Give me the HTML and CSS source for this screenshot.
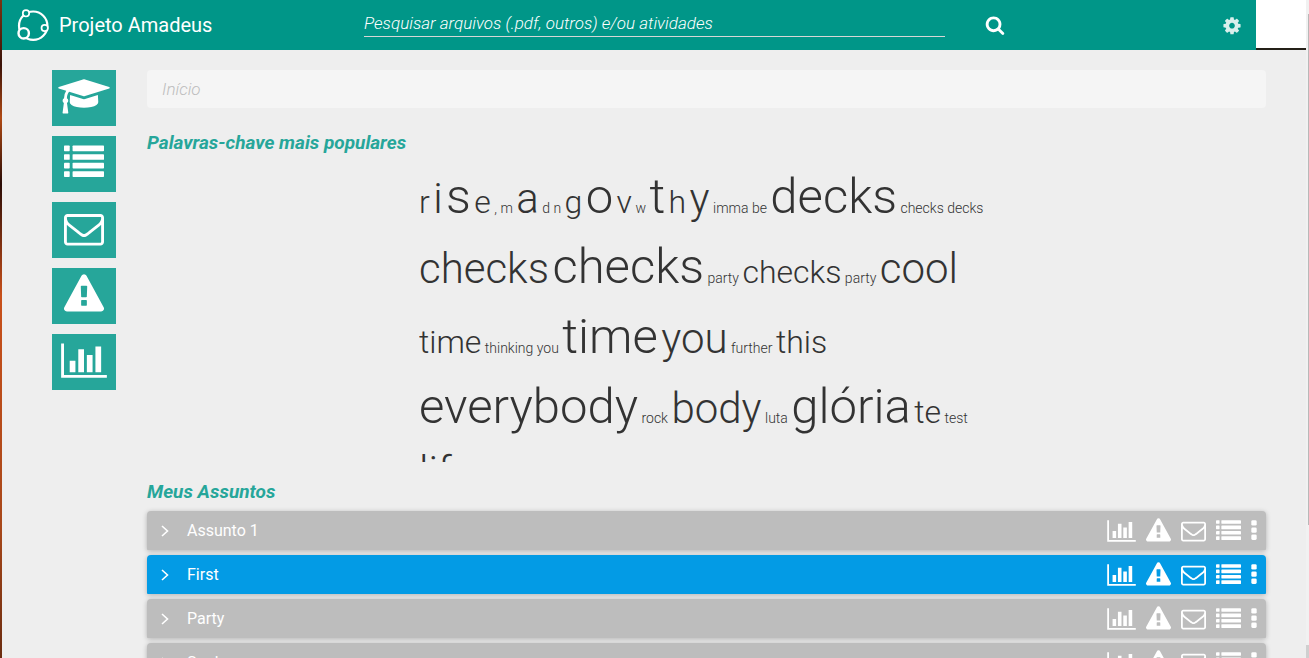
FILE: index.html
```
<!DOCTYPE html>
<html lang="pt-BR">
<head>
<meta charset="utf-8">
<title>Projeto Amadeus</title>
<link rel="stylesheet" href="styles.css">
</head>
<body>
<svg class="sprite" aria-hidden="true">
  <symbol id="chart" viewBox="0 -32 2048 1792"><path d="M640 896v512h-256v-512zM1024 384v1024h-256v-1024zM2048 1536v128h-2048v-1536h128v1408zM1408 640v768h-256v-768zM1792 256v1152h-256v-1152z"/></symbol>
  <symbol id="warning" viewBox="0 -16 1792 1792"><path d="M1024 1375v-190q0-14-9.500-23.500t-22.500-9.500h-192q-13 0-22.500 9.500t-9.500 23.500v190q0 14 9.500 23.500t22.500 9.500h192q13 0 22.500-9.500t9.500-23.500zm-2-374l18-459q0-12-10-19-13-11-24-11h-220q-11 0-24 11-10 7-10 21l17 457q0 10 10 16.500t24 6.500h185q14 0 23.500-6.500t10.500-16.500zm-14-934l768 1408q35 63-2 126-17 29-46.500 46t-63.500 17h-1536q-34 0-63.500-17t-46.500-46q-37-63-2-126l768-1408q17-31 47-49t65-18 65 18 47 49z"/></symbol>
  <symbol id="mail" viewBox="0 -16 1792 1792"><path d="M1664 1504v-768q-32 36-69 66-268 206-426 338-51 43-83 67t-86.500 48.500-102.500 24.500h-2q-48 0-102.500-24.500t-86.500-48.500-83-67q-158-132-426-338-37-30-69-66v768q0 13 9.500 22.500t22.500 9.500h1472q13 0 22.500-9.500t9.500-22.500zm0-1051v-24.500l-.5-13-3-12.500-5.500-9-9-7.500-14-2.500h-1472q-13 0-22.500 9.500t-9.500 22.500q0 168 147 284 193 152 401 317 6 5 35 29.500t46 37.500 44.500 31.500 50.500 27.500 43 9h2q20 0 43-9t50.500-27.500 44.500-31.500 46-37.500 35-29.500q208-165 401-317 54-43 100.500-115.500t46.500-131.500zm128-37v1088q0 66-47 113t-113 47h-1472q-66 0-113-47t-47-113v-1088q0-66 47-113t113-47h1472q66 0 113 47t47 113z"/></symbol>
  <symbol id="list" viewBox="0 -32 1792 1792"><g><rect y="128" width="256" height="256" rx="32"/><rect x="384" y="128" width="1408" height="256" rx="32"/><rect y="512" width="256" height="256" rx="32"/><rect x="384" y="512" width="1408" height="256" rx="32"/><rect y="896" width="256" height="256" rx="32"/><rect x="384" y="896" width="1408" height="256" rx="32"/><rect y="1280" width="256" height="256" rx="32"/><rect x="384" y="1280" width="1408" height="256" rx="32"/></g></symbol>
  <symbol id="dots" viewBox="0 -32 384 1792"><rect y="128" width="384" height="384" rx="96"/><rect y="640" width="384" height="384" rx="96"/><rect y="1152" width="384" height="384" rx="96"/></symbol>
  <symbol id="cap" viewBox="0 -16 2304 1792"><path d="M1774 836l18 316q4 69-82 128t-235 93.500-323 34.500-323-34.500-235-93.500-82-128l18-316 574 181q22 7 48 7t48-7zm530-324q0 23-22 31l-1120 352q-4 1-10 1t-10-1l-652-206q-43 34-71 111.500t-34 178.500q63 36 63 109 0 69-58 107l58 433q2 14-8 25-9 11-24 11h-192q-15 0-24-11-10-11-8-25l58-433q-58-38-58-107 0-73 65-111 11-207 98-330l-333-104q-22-8-22-31t22-31l1120-352q4-1 10-1t10 1l1120 352q22 8 22 31z"/></symbol>
  <symbol id="cog" viewBox="0 -64 1792 1792"><path d="M1152 896q0-106-75-181t-181-75-181 75-75 181 75 181 181 75 181-75 75-181zm512-109v222q0 12-8 23t-20 13l-185 28q-19 54-39 91 35 50 107 138 10 12 10 25t-9 23q-27 37-99 108t-94 71q-12 0-26-9l-138-108q-44 23-91 38-16 136-29 186-7 28-36 28h-222q-14 0-24.500-8.500t-11.500-21.500l-28-184q-49-16-90-37l-141 107q-10 9-25 9-14 0-25-11-126-114-165-168-7-10-7-23 0-12 8-23 15-21 51-66.500t54-70.500q-27-50-41-99l-183-27q-13-2-21-12.500t-8-23.500v-222q0-12 8-23t19-13l186-28q14-46 39-92-40-57-107-138-10-12-10-24 0-10 9-23 26-36 98.500-107.500t94.500-71.500q13 0 26 10l138 107q44-23 91-38 16-136 29-186 7-28 36-28h222q14 0 24.500 8.500t11.500 21.500l28 184q49 16 90 37l142-107q9-9 24-9 13 0 25 10 129 119 165 170 7 8 7 22 0 12-8 23-15 21-51 66.500t-54 70.500q26 50 41 98l183 28q13 2 21 12.500t8 23.500z"/></symbol>
  <symbol id="search" viewBox="0 0 1792 1792"><path d="M1216 832q0-185-131.500-316.500t-316.500-131.500-316.500 131.500-131.500 316.500 131.500 316.500 316.500 131.500 316.500-131.500 131.500-316.500zm512 832q0 52-38 90t-90 38q-54 0-90-38l-343-342q-179 124-399 124-143 0-273.500-55.500t-225-150-150-225-55.500-273.500 55.500-273.500 150-225 225-150 273.500-55.500 273.500 55.500 225 150 150 225 55.500 273.500q0 220-124 399l343 343q37 37 37 90z"/></symbol>
  <symbol id="chevron" viewBox="0 0 8 12"><path class="line" d="M1 1l5.500 5L1 11"/></symbol>
</svg>

<div class="window">
  <header class="topbar">
    <div class="bar">
      <a class="brand" href="#">
        <svg class="logo" viewBox="0 0 32 34" aria-hidden="true">
          <circle cx="16.200" cy="17.700" r="14.200" stroke-width="2.200"/>
          <circle class="node" cx="9" cy="5.300" r="3.200" stroke-width="1.700"/>
          <circle class="node" cx="27.700" cy="20" r="3.200" stroke-width="1.700"/>
          <circle class="node" cx="6.700" cy="25.300" r="5.200" stroke-width="2.400"/>
        </svg>
        <span>Projeto Amadeus</span>
      </a>
      <form class="search">
        <input class="field" type="text" aria-label="Pesquisar" placeholder="Pesquisar arquivos (.pdf, outros) e/ou atividades">
        <button class="icon-btn" type="button" aria-label="Pesquisar"><svg class="i20"><use href="#search"/></svg></button>
      </form>
      <button class="icon-btn settings" type="button" aria-label="Configurações"><svg class="i20"><use href="#cog"/></svg></button>
    </div>
    <div class="corner"></div>
  </header>

  <div class="page">
    <nav class="side">
      <a class="tile" href="#" aria-label="Assuntos"><svg class="cap"><use href="#cap"/></svg></a>
      <a class="tile" href="#" aria-label="Lista"><svg class="i40"><use href="#list"/></svg></a>
      <a class="tile" href="#" aria-label="Mensagens"><svg class="i40"><use href="#mail"/></svg></a>
      <a class="tile" href="#" aria-label="Pendências"><svg class="i40"><use href="#warning"/></svg></a>
      <a class="tile" href="#" aria-label="Relatórios"><svg class="chart40"><use href="#chart"/></svg></a>
    </nav>

    <main class="content">
      <div class="crumb">Início</div>
      <h2 class="title">Palavras-chave mais populares</h2>
      <div class="cloud">
        <a class="m" href="#">r</a>
        <a class="l" href="#">i</a>
        <a class="xl" href="#">s</a>
        <a class="m" href="#">e</a>
        <a href="#">,</a>
        <a href="#">m</a>
        <a class="l" href="#">a</a>
        <a href="#">d</a>
        <a href="#">n</a>
        <a class="m" href="#">g</a>
        <a class="xl" href="#">o</a>
        <a class="m" href="#">v</a>
        <a href="#">w</a>
        <a class="xl" href="#">t</a>
        <a class="m" href="#">h</a>
        <a class="l" href="#">y</a>
        <a href="#">imma be</a>
        <a class="xl" href="#">decks</a>
        <a href="#">checks decks</a>
        <a class="l" href="#">checks</a>
        <a class="xl" href="#">checks</a>
        <a href="#">party</a>
        <a class="m" href="#">checks</a>
        <a href="#">party</a>
        <a class="l" href="#">cool</a>
        <a class="m" href="#">time</a>
        <a href="#">thinking you</a>
        <a class="xl" href="#">time</a>
        <a class="l" href="#">you</a>
        <a href="#">further</a>
        <a class="m" href="#">this</a>
        <a class="xl" href="#">everybody</a>
        <a href="#">rock</a>
        <a class="l" href="#">body</a>
        <a href="#">luta</a>
        <a class="xl" href="#">glória</a>
        <a class="m" href="#">te</a>
        <a href="#">test</a>
        <a class="l" href="#">life</a>
      </div>
      <h2 class="title">Meus Assuntos</h2>
      <ul class="subjects">
        <li class="subject"><svg class="chev"><use href="#chevron"/></svg><a class="name" href="#">Assunto 1</a><span class="tools"><svg class="chart25"><use href="#chart"/></svg><svg class="i25"><use href="#warning"/></svg><svg class="i25"><use href="#mail"/></svg><svg class="i25"><use href="#list"/></svg><svg class="dots"><use href="#dots"/></svg></span></li>
        <li class="subject active"><svg class="chev"><use href="#chevron"/></svg><a class="name" href="#">First</a><span class="tools"><svg class="chart25"><use href="#chart"/></svg><svg class="i25"><use href="#warning"/></svg><svg class="i25"><use href="#mail"/></svg><svg class="i25"><use href="#list"/></svg><svg class="dots"><use href="#dots"/></svg></span></li>
        <li class="subject"><svg class="chev"><use href="#chevron"/></svg><a class="name" href="#">Party</a><span class="tools"><svg class="chart25"><use href="#chart"/></svg><svg class="i25"><use href="#warning"/></svg><svg class="i25"><use href="#mail"/></svg><svg class="i25"><use href="#list"/></svg><svg class="dots"><use href="#dots"/></svg></span></li>
        <li class="subject"><svg class="chev"><use href="#chevron"/></svg><a class="name" href="#">Sook</a><span class="tools"><svg class="chart25"><use href="#chart"/></svg><svg class="i25"><use href="#warning"/></svg><svg class="i25"><use href="#mail"/></svg><svg class="i25"><use href="#list"/></svg><svg class="dots"><use href="#dots"/></svg></span></li>
      </ul>
    </main>
  </div>
</div>
<div class="scroll"></div>
</body>
</html>
```

FILE: styles.css
```
* { box-sizing: border-box; }
html, body { height: 100%; }
body {
  margin: 0;
  display: flex;
  overflow: hidden;
  background: #eee;
  color: #333;
  font: 14px/20px Roboto, sans-serif;
}
a { color: inherit; text-decoration: none; }
svg { display: block; fill: currentColor; }
.sprite { position: absolute; width: 0; height: 0; }
.line { fill: none; stroke: currentColor; stroke-width: 1.6; }

.window {
  flex: 1;
  min-width: 0;
  border-left: 2px solid;
  border-image: linear-gradient(#7a3412, #3a1208 10%, #b04a14 18%, #2a0c06 28%, #c8501a 45%, #a8481a 80%, #6a2c10) 1;
}
.topbar { display: flex; height: 50px; }
.bar {
  flex: 1;
  display: flex;
  align-items: center;
  padding: 0 14px 0 15px;
  background: #009688;
  color: #fff;
}
.brand {
  flex: 0 0 347px;
  display: flex;
  align-items: center;
  gap: 10px;
  font-size: 20px;
}
.logo { width: 32px; height: 34px; stroke: #fff; fill: none; }
.node { fill: #009688; }
.search { flex: 1; display: flex; align-items: center; gap: 40px; }
.field {
  flex: 0 1 581px;
  height: 26px;
  margin-bottom: 3px;
  padding: 0;
  border: 0;
  border-bottom: 1px solid #d6d6d6;
  background: none;
  color: #fff;
  font: italic 300 17px/24px Roboto, sans-serif;
}
.field::placeholder { color: #fff; opacity: 1; }
.icon-btn { padding: 0; border: 0; background: none; color: #fff; }
.settings { color: #d9efec; }
.i20 { width: 20px; height: 20px; }
.corner {
  width: 50px;
  background: #fff;
  border-bottom: 2px solid #242018;
}

.page { display: flex; gap: 31px; padding: 20px 40px 0 50px; }
.side { display: flex; flex-direction: column; gap: 10px; }
.tile {
  width: 64px;
  height: 56px;
  padding-top: 6px;
  display: flex;
  justify-content: center;
  background: #26a69a;
  color: #fff;
}
.i40 { width: 40px; height: 40px; }
.cap { width: 52px; height: 40px; }
.chart40 { width: 46px; height: 40px; }

.content { flex: 1; min-width: 0; }
.crumb {
  padding: 9px 15px;
  margin-bottom: 25px;
  border-radius: 4px;
  background: #f5f5f5;
  color: #bdbdbd;
  font: italic 300 17px/20px Roboto, sans-serif;
}
.title {
  margin: 0 0 9px;
  color: #26a69a;
  font: italic 700 19px/20px Roboto, sans-serif;
}
.cloud {
  width: 575px;
  max-width: 100%;
  height: 300px;
  margin: 0 auto 20px;
  overflow: hidden;
  font-weight: 300;
  line-height: 20px;
}
.m { font-size: 32px; line-height: 46px; }
.l { font-size: 42px; line-height: 60px; }
.xl { font-size: 49px; line-height: 70px; }
.subjects {
  margin: 0;
  padding: 0;
  list-style: none;
  display: flex;
  flex-direction: column;
  gap: 5px;
}
.subject {
  display: flex;
  align-items: center;
  padding: 7px 9px 7px 14px;
  border-radius: 4px 4px 1px 1px;
  background: #bdbdbd;
  box-shadow: 0 1px 5px rgba(0, 0, 0, .26);
  color: #fff;
  font-size: 16px;
}
.active { background: #039be5; }
.chev { width: 8px; height: 12px; }
.name { flex: 1; margin-left: 18px; }
.tools { display: flex; gap: 10px; }
.i25 { width: 25px; height: 25px; }
.chart25 { width: 29px; height: 25px; }
.dots { width: 6px; height: 25px; }
.scroll {
  width: 3px;
  background:
    linear-gradient(transparent 14px, #b8b8b8 14px, #b8b8b8 525px, transparent 525px) right / 1px 100% no-repeat,
    linear-gradient(#f1f1f1 645px, #cfcfcf 645px);
}
```
